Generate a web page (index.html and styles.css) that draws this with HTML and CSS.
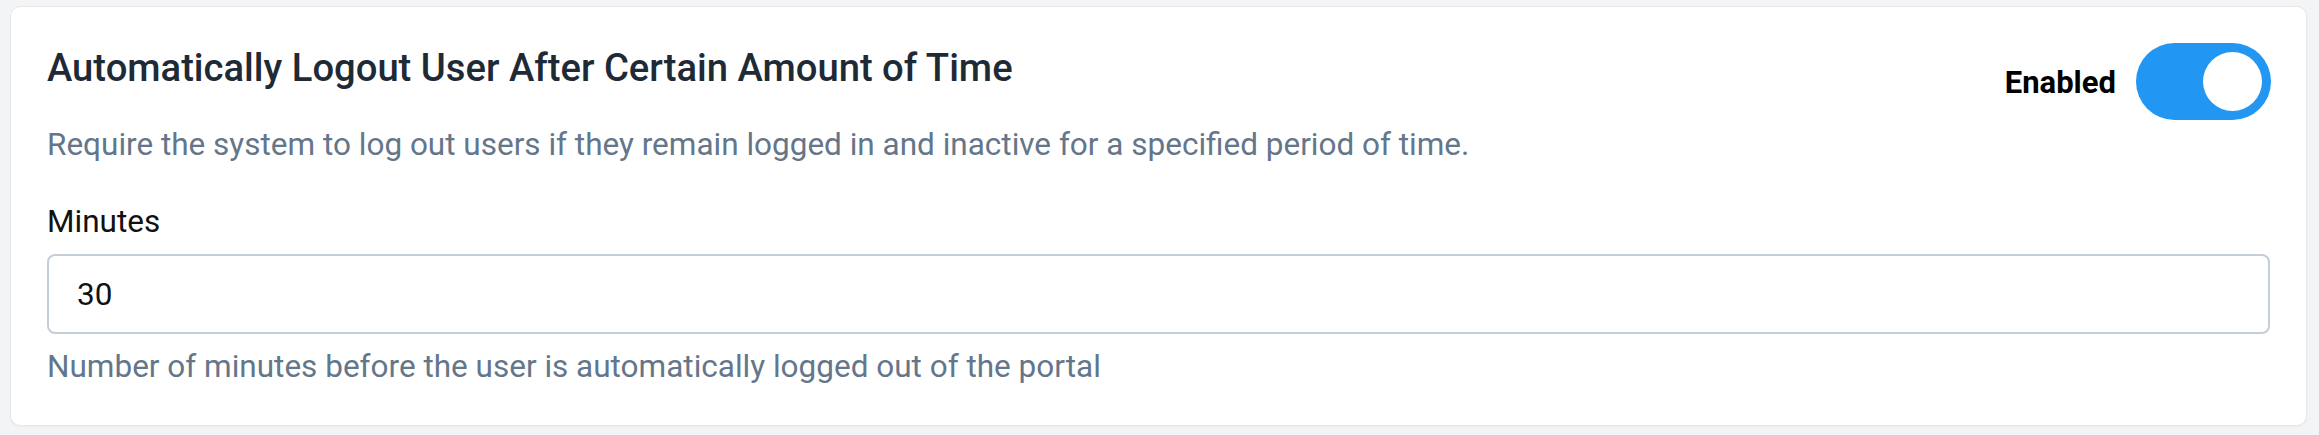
FILE: index.html
```html
<!DOCTYPE html>
<html lang="en">
<head>
<meta charset="utf-8">
<title>Logout settings</title>
<link rel="stylesheet" href="styles.css">
</head>
<body>
<section class="card">
  <div class="card-header">
    <h2 class="card-title">Automatically Logout User After Certain Amount of Time</h2>
    <div class="switch-group">
      <span class="switch-label">Enabled</span>
      <span class="switch is-on" role="switch" aria-checked="true"><span class="knob"></span></span>
    </div>
  </div>
  <p class="card-desc">Require the system to log out users if they remain logged in and inactive for a specified period of time.</p>
  <label class="field-label" for="minutes">Minutes</label>
  <input class="field-input" id="minutes" type="text" value="30">
  <p class="field-help">Number of minutes before the user is automatically logged out of the portal</p>
</section>
</body>
</html>
```

FILE: styles.css
```css
html, body {
  margin: 0;
  padding: 0;
}
body {
  background: #f3f4f6;
  font-family: Roboto, "Liberation Sans", Arial, sans-serif;
  padding: 7px 13px 11px 11px;
}
.card {
  background: #ffffff;
  border-radius: 9px;
  box-shadow: 0 0 0 1px #e6e8eb, 0 1px 3px rgba(0, 0, 0, 0.08);
  padding: 36px 36px 36px 36px;
}
.card-header {
  display: flex;
  justify-content: space-between;
  align-items: flex-start;
  height: 77px;
}
.card-title {
  margin: 0;
  font-size: 38.2px;
  font-weight: 500;
  line-height: 50px;
  color: #1f2a37;
}
.switch-group {
  display: flex;
  align-items: center;
  gap: 20px;
  margin-right: -1px;
}
.switch-label {
  font-size: 31px;
  font-weight: 700;
  color: #000;
  line-height: 45px;
  padding-top: 1px;
}
.switch {
  width: 135px;
  height: 77px;
  border-radius: 39px;
  background: #2196f3;
  display: flex;
  align-items: center;
  justify-content: flex-end;
  padding: 0 9px;
  box-sizing: border-box;
}
.knob {
  width: 59px;
  height: 59px;
  border-radius: 50%;
  background: #fff;
}
.card-desc {
  margin: 2px 0 0;
  font-size: 31.5px;
  line-height: 45px;
  color: #64768a;
}
.field-label {
  display: block;
  margin-top: 32px;
  font-size: 31.5px;
  line-height: 45px;
  color: #111;
}
.field-input {
  display: block;
  box-sizing: border-box;
  width: 100%;
  height: 80px;
  margin-top: 10px;
  padding: 0 28px;
  border: 2px solid #c5cdd8;
  border-radius: 8px;
  font-family: Roboto, "Liberation Sans", Arial, sans-serif;
  font-size: 31.5px;
  color: #111;
  background: #fff;
  outline: none;
}
.field-help {
  margin: 10px 0 0;
  font-size: 31.5px;
  line-height: 45px;
  color: #64768a;
}
```
